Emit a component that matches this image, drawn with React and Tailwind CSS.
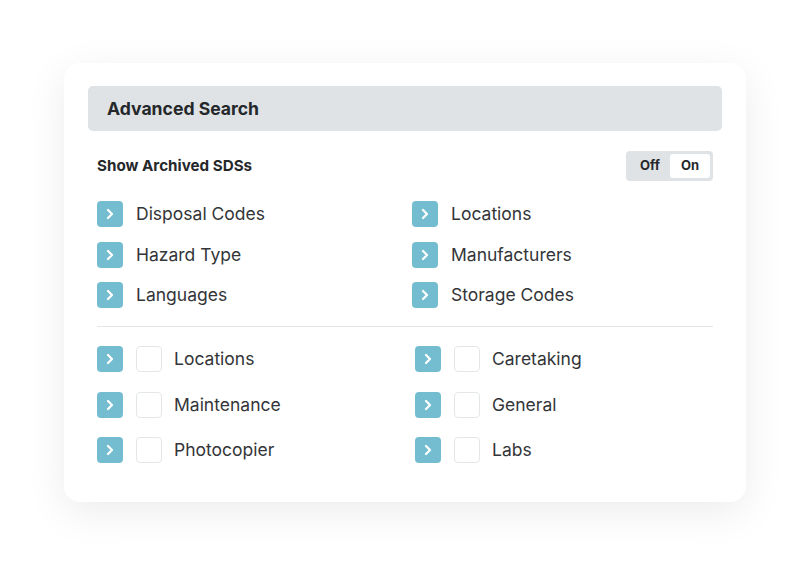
import { ChevronRight } from "lucide-react";

const topLeft = ["Disposal Codes", "Hazard Type", "Languages"];
const topRight = ["Locations", "Manufacturers", "Storage Codes"];
const bottomLeft = ["Locations", "Maintenance", "Photocopier"];
const bottomRight = ["Caretaking", "General", "Labs"];

function Chevron() {
  return (
    <div className="w-[26px] h-[26px] rounded-[4px] bg-[#74bdd1] flex items-center justify-center shrink-0">
      <ChevronRight size={16} strokeWidth={3.4} className="text-white" />
    </div>
  );
}

function Check() {
  return <div className="w-[26px] h-[26px] rounded-[4px] border border-[#e3e7e8] bg-white shrink-0" />;
}

function FilterRow({ label }) {
  return (
    <div className="flex items-center h-[26px]">
      <Chevron />
      <span className="ml-[13px] text-[17.5px] text-[#333538] leading-none">{label}</span>
    </div>
  );
}

function CheckRow({ label }) {
  return (
    <div className="flex items-center h-[26px]">
      <Chevron />
      <div className="ml-[13px]">
        <Check />
      </div>
      <span className="ml-[12px] text-[17.5px] text-[#333538] leading-none">{label}</span>
    </div>
  );
}

export default function App() {
  return (
    <div
      className="w-[811px] h-[566px] bg-white pt-[63px] pl-[64px]"
      style={{ fontFamily: "Inter, 'Open Sans', sans-serif" }}
    >
      <div className="w-[682px] h-[439px] bg-white rounded-[16px] shadow-[0_10px_40px_rgba(0,0,0,0.08)] pt-[23px] px-[24px]">
        <div className="h-[45px] bg-[#dfe3e6] rounded-[5px] flex items-center pl-[19px] pt-[2px]">
          <h2 className="text-[17.6px] font-bold text-[#25282b]">Advanced Search</h2>
        </div>

        <div className="px-[9px]">
          <div className="mt-[20px] h-[30px] flex items-center justify-between">
            <span className="text-[15.2px] font-bold text-[#25282b]">Show Archived SDSs</span>
            <div className="w-[87px] h-[30px] bg-[#dfe3e6] rounded-[4px] flex items-center p-[3px]">
              <span className="flex-1 text-center text-[13px] font-bold text-[#25282b] pl-[1px]">Off</span>
              <span className="w-[40px] h-[24px] bg-white rounded-[3px] flex items-center justify-center text-[13px] font-bold text-[#25282b]">
                On
              </span>
            </div>
          </div>

          <div className="mt-[20px] grid grid-cols-[315px_1fr] gap-y-[14.5px]">
            {topLeft.map((l, i) => (
              <div key={l} className="contents">
                <FilterRow label={l} />
                <FilterRow label={topRight[i]} />
              </div>
            ))}
          </div>

          <div className="mt-[18px] h-px bg-[#e3e5e7]" />

          <div className="mt-[19px] grid grid-cols-[318px_1fr] gap-y-[19.5px]">
            {bottomLeft.map((l, i) => (
              <div key={l} className="contents">
                <CheckRow label={l} />
                <CheckRow label={bottomRight[i]} />
              </div>
            ))}
          </div>
        </div>
      </div>
    </div>
  );
}
